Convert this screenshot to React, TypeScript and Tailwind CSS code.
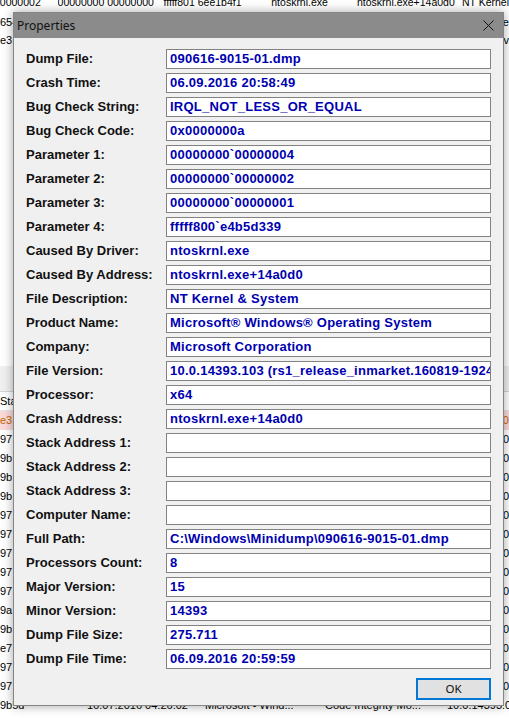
const fields: [string, string][] = [
  ["Dump File:", "090616-9015-01.dmp"],
  ["Crash Time:", "06.09.2016 20:58:49"],
  ["Bug Check String:", "IRQL_NOT_LESS_OR_EQUAL"],
  ["Bug Check Code:", "0x0000000a"],
  ["Parameter 1:", "00000000`00000004"],
  ["Parameter 2:", "00000000`00000002"],
  ["Parameter 3:", "00000000`00000001"],
  ["Parameter 4:", "fffff800`e4b5d339"],
  ["Caused By Driver:", "ntoskrnl.exe"],
  ["Caused By Address:", "ntoskrnl.exe+14a0d0"],
  ["File Description:", "NT Kernel & System"],
  ["Product Name:", "Microsoft® Windows® Operating System"],
  ["Company:", "Microsoft Corporation"],
  ["File Version:", "10.0.14393.103 (rs1_release_inmarket.160819-1924)"],
  ["Processor:", "x64"],
  ["Crash Address:", "ntoskrnl.exe+14a0d0"],
  ["Stack Address 1:", ""],
  ["Stack Address 2:", ""],
  ["Stack Address 3:", ""],
  ["Computer Name:", ""],
  ["Full Path:", "C:\\Windows\\Minidump\\090616-9015-01.dmp"],
  ["Processors Count:", "8"],
  ["Major Version:", "15"],
  ["Minor Version:", "14393"],
  ["Dump File Size:", "275.711"],
  ["Dump File Time:", "06.09.2016 20:59:59"],
];

// left / right slivers of the list rows that peek out around the dialog
const lowerRows = [
  ["e3", "10"], ["97", "0"], ["9b", "0"], ["9b", "0"], ["9b", "0"], ["97", "0"], ["97", "0"], ["97", "0"],
  ["97", "0"], ["97", "0"], ["9a", "0"], ["9b", "0"], ["e7", "10"], ["97", "0"], ["97", "0"],
];

function App() {
  return (
    <div className="relative w-[509px] h-[718px] overflow-hidden bg-white font-['Liberation_Sans',Arial,sans-serif] text-[11px] text-black">
      {/* list window behind the dialog */}
      <div className="flex flex-col -mt-[6px]">
        <div className="flex h-[18.5px] items-center whitespace-nowrap text-[10.5px]">
          <div className="w-[66px] -ml-[6px] overflow-hidden">00000002</div>
          <div className="w-[110px] overflow-hidden">00000000 00000000</div>
          <div className="w-[112px] overflow-hidden">fffff801 6ee1b4f1</div>
          <div className="w-[89px] overflow-hidden">ntoskrnl.exe</div>
          <div className="w-[109px] overflow-hidden">ntoskrnl.exe+14a0d0</div>
          <div className="flex-1">NT Kernel</div>
        </div>
        <div className="flex h-[18.5px] items-center justify-between whitespace-nowrap">
          <span>654</span>
          <span>Ke</span>
        </div>
        <div className="flex h-[18.5px] items-center justify-between whitespace-nowrap">
          <span>e3</span>
          <span>dv</span>
        </div>
        <div className="h-[316.5px]" />
        <div className="h-[26px] bg-[#f0f0f0] border-b border-[#d5d5d5]" />
        <div className="flex h-[19px] items-center whitespace-nowrap border-b border-[#e5e5e5]">
          <span>Star</span>
        </div>
        {lowerRows.map(([l, r], i) => (
          <div
            key={i}
            className={`flex h-[19px] items-center justify-between whitespace-nowrap ${i === 0 ? "bg-[#fbdada] text-[#c86400]" : ""}`}
          >
            <span>{l}</span>
            <span>{r}</span>
          </div>
        ))}
        <div className="flex h-[19px] items-center whitespace-nowrap">
          <div className="w-[87px] overflow-hidden">9b5d</div>
          <div className="w-[118px] overflow-hidden">16.07.2016 04:26:02</div>
          <div className="w-[120px] overflow-hidden">Microsoft - Wind...</div>
          <div className="w-[122px] overflow-hidden">Code Integrity Mo...</div>
          <div className="flex-1 overflow-hidden">10.0.14393.0</div>
        </div>
      </div>

      {/* Properties dialog */}
      <div className="absolute left-[13px] top-[12px] w-[491px] h-[694px] bg-[#f0f0f0] border border-[#858585] shadow-[0_0_10px_rgba(0,0,0,0.35)] flex flex-col">
        <div className="h-[25px] bg-[#8b8b8b] flex items-center justify-between pl-[3px] pr-[9px]">
          <span className="font-['Noto_Sans',sans-serif] text-[12px] text-[#111]">Properties</span>
          <svg width="11" height="11" viewBox="0 0 11 11">
            <path d="M0.5 0.5 L10.5 10.5 M10.5 0.5 L0.5 10.5" stroke="#111" strokeWidth="1" />
          </svg>
        </div>
        <div className="pt-[11px] pl-[12px] grid grid-cols-[140px_325px] gap-y-[4px]">
          {fields.map(([label, value]) => (
            <div key={label} className="contents">
              <div className="h-[20px] flex items-center font-bold text-[13px] text-[#111] whitespace-nowrap">{label}</div>
              <div className="h-[20px] bg-white border border-[#828282] flex items-center pl-[3px] overflow-hidden whitespace-nowrap font-bold text-[13px] tracking-[0.25px] text-[#0000b0]">
                {value}
              </div>
            </div>
          ))}
        </div>
        <div className="flex justify-end pr-[12px] mt-[9px]">
          <button className="w-[75px] h-[22px] border-2 border-[#0078d7] bg-[#e1e1e1] font-['Noto_Sans',sans-serif] text-[11.5px] text-[#111] flex items-center justify-center">
            OK
          </button>
        </div>
      </div>
    </div>
  );
}

export default App;
